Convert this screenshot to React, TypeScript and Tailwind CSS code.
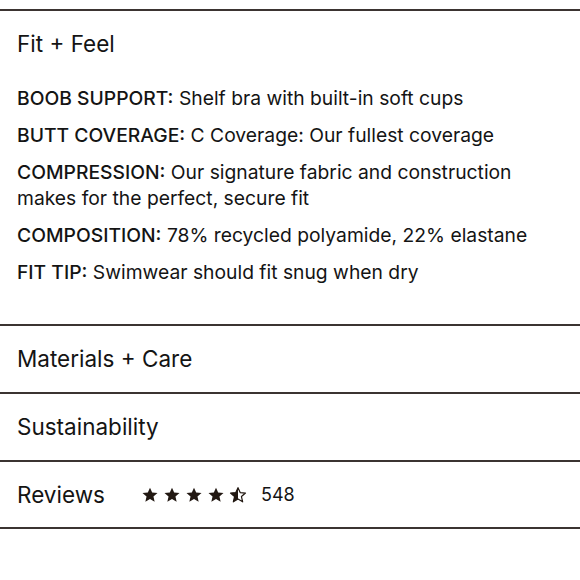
import React from 'react';

const Star = ({ fill }: { fill: 'full' | 'half' }) => (
    <svg width="18" height="18" viewBox="0 0 24 24" className="shrink-0">
        <defs>
            <clipPath id="half-clip">
                <rect x="0" y="0" width="12" height="24" />
            </clipPath>
        </defs>
        {fill === 'full' ? (
            <path d="M12 2.2l2.9 6.6 7.1.6-5.4 4.7 1.6 7-6.2-3.7-6.2 3.7 1.6-7L2 9.4l7.1-.6z" fill="#221812" />
        ) : (
            <>
                <path d="M12 2.2l2.9 6.6 7.1.6-5.4 4.7 1.6 7-6.2-3.7-6.2 3.7 1.6-7L2 9.4l7.1-.6z" fill="none" stroke="#221812" strokeWidth="1.6" strokeLinejoin="round" />
                <path d="M12 2.2l2.9 6.6 7.1.6-5.4 4.7 1.6 7-6.2-3.7-6.2 3.7 1.6-7L2 9.4l7.1-.6z" fill="#221812" clipPath="url(#half-clip)" />
            </>
        )}
    </svg>
);

const details = [
    { label: 'BOOB SUPPORT:', text: 'Shelf bra with built-in soft cups' },
    { label: 'BUTT COVERAGE:', text: 'C Coverage: Our fullest coverage' },
    { label: 'COMPRESSION:', text: 'Our signature fabric and construction makes for the perfect, secure fit' },
    { label: 'COMPOSITION:', text: '78% recycled polyamide, 22% elastane' },
    { label: 'FIT TIP:', text: 'Swimwear should fit snug when dry' },
];

const App = () => {
    return (
        <div className="w-[580px] h-[580px] overflow-hidden bg-white text-[#141414] font-['Inter',sans-serif]">
            <div className="h-[9px]" />
            <section className="border-t-2 border-[#3b3431] pl-[17px] pr-4 pt-[18px] pb-[39px]">
                <h2 className="text-[22.5px] leading-[30px] font-normal">Fit + Feel</h2>
                <div className="mt-[26px] flex flex-col gap-[11px]">
                    {details.map((d) => (
                        <p key={d.label} className="text-[19.3px] leading-[26px] max-w-[530px]">
                            <span className="font-medium">{d.label}</span> {d.text}
                        </p>
                    ))}
                </div>
            </section>
            <div className="border-t-2 border-[#3b3431] h-[68px] pl-[17px] flex items-center">
                <span className="text-[22.5px]">Materials + Care</span>
            </div>
            <div className="border-t-2 border-[#3b3431] h-[68px] pl-[17px] flex items-center">
                <span className="text-[22.5px]">Sustainability</span>
            </div>
            <div className="border-t-2 border-[#3b3431] border-b-2 h-[69px] pl-[17px] flex items-center">
                <span className="text-[22.5px] w-[124px]">Reviews</span>
                <div className="flex items-center gap-[4px]">
                    <Star fill="full" />
                    <Star fill="full" />
                    <Star fill="full" />
                    <Star fill="full" />
                    <Star fill="half" />
                </div>
                <span className="ml-[14px] text-[18px]">548</span>
            </div>
        </div>
    );
};

export default App;
